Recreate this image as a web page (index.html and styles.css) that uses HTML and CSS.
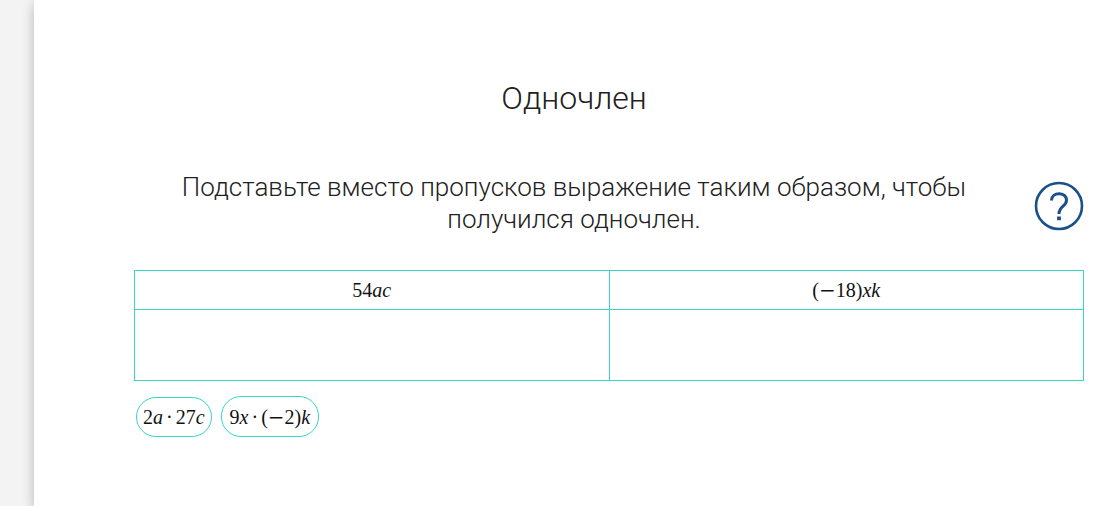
FILE: index.html
```html
<!DOCTYPE html>
<html lang="ru">
<head>
<meta charset="utf-8">
<title>Одночлен</title>
<link rel="stylesheet" href="styles.css">
</head>
<body>
<main class="sheet">
  <h1 class="title">Одночлен</h1>
  <div class="task">
    <p class="question">Подставьте вместо пропусков выражение таким образом, чтобы получился одночлен.</p>
    <button class="help" type="button" aria-label="Помощь">
      <svg viewBox="0 0 50 50" width="50" height="50" aria-hidden="true" fill="none" stroke="#1b4f8a">
        <circle cx="25" cy="25" r="23" stroke-width="2.600"/>
        <path d="M17.500 19.500C17.500 10.500 32.500 10.500 32.500 19.200C32.500 25.500 25 25 25 33" stroke-width="3"/>
        <path d="M25 35.500V39.200" stroke-width="3.800"/>
      </svg>
    </button>
  </div>
  <table class="slots">
    <thead>
      <tr><th scope="col">54<i>ac</i></th><th scope="col">(<span class="minus">−</span>18)<i>xk</i></th></tr>
    </thead>
    <tbody>
      <tr><td></td><td></td></tr>
    </tbody>
  </table>
  <div class="options">
    <button class="chip" type="button">2<i>a</i><span class="op">·</span>27<i>c</i></button>
    <button class="chip chip-tall" type="button">9<i>x</i><span class="op">·</span>(<span class="minus">−</span>2)<i>k</i></button>
  </div>
</main>
</body>
</html>
```

FILE: styles.css
```css
* { box-sizing: border-box; }
body {
  margin: 0;
  background: #f3f3f3;
  font-family: Roboto, "Noto Sans", sans-serif;
  font-weight: 300;
  color: #212121;
}
.sheet {
  min-height: 100vh;
  margin-left: 34px;
  padding: 78px 10px 40px 100px;
  background: #fff;
  box-shadow: 0 5px 12px rgba(0, 0, 0, .2), 0 2px 10px rgba(0, 0, 0, .06);
}
.title {
  margin: 0 70px 0 0;
  font-size: 32px;
  line-height: 40px;
  font-weight: 300;
  text-align: center;
}
.task {
  display: flex;
  align-items: flex-end;
  gap: 20px;
  margin-top: 53px;
}
.question {
  flex: 1;
  margin: 0;
  font-size: 26px;
  line-height: 32px;
  text-align: center;
}
.help {
  padding: 0 0 4px;
  border: 0;
  background: none;
}
.help svg { display: block; }
.slots {
  width: 100%;
  margin-top: 35px;
  table-layout: fixed;
  border-collapse: collapse;
}
.slots th, .slots td {
  height: 39px;
  padding: 0;
  border: 1px solid #36d6c3;
}
.slots td { height: 71px; }
.slots th, .chip {
  font: 20px/24px "Liberation Serif", serif;
  color: #111;
}
.op { margin: 0 3px; }
.minus {
  font-family: "DejaVu Serif", serif;
  font-size: 20px;
  line-height: 20px;
}
.options {
  display: flex;
  align-items: flex-end;
  gap: 9px;
  margin: 15px 2px 0;
}
.chip {
  height: 40px;
  padding: 0 6px;
  border: 1px solid #36d6c3;
  border-radius: 20px;
  background: #fff;
}
.chip-tall {
  height: 41px;
  padding: 0 8px;
}
```
